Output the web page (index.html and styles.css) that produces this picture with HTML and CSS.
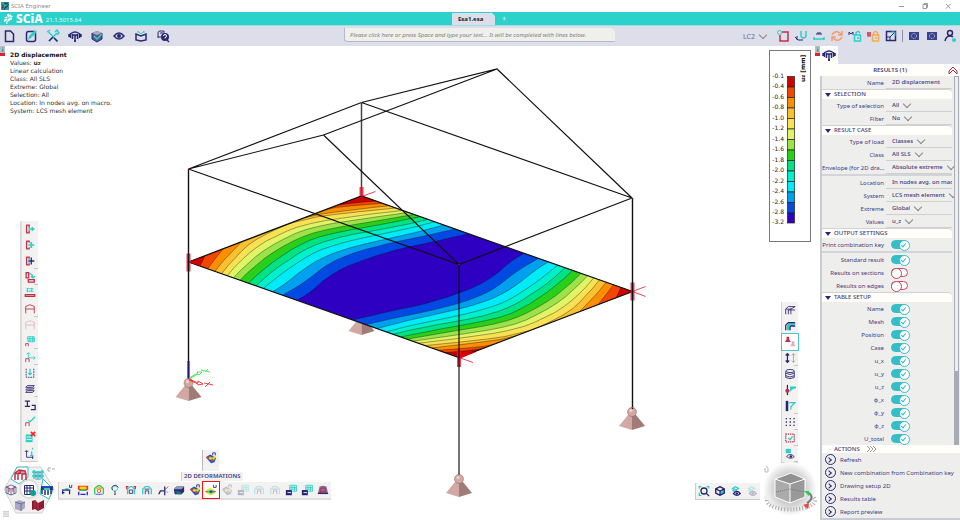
FILE: index.html
```html
<!DOCTYPE html>
<html lang="en">
<head>
<meta charset="utf-8">
<title>SCIA Engineer</title>
<link rel="stylesheet" href="styles.css">
</head>
<body>
<svg class="defs" aria-hidden="true">
  <defs>
    <symbol id="tree" viewBox="0 0 14 14"><path fill="currentColor" d="M6 1l2-1 1 2 2-1 1 2 2 1-2 2 1 2-3 1-1 2H7l-1 3-2 1 1-4-3 1-1-3 2-1-1-3 3 0z"/><path d="M4 12L9 4M3 7l4 0M8 6l4-1M6 3l1 4" stroke="var(--vein)" fill="none" stroke-width="1"/></symbol>
    <symbol id="doc" viewBox="0 0 14 14"><path d="M3.500 2h5l3 3v7.500h-8z" class="n w"/></symbol>
    <symbol id="edit" viewBox="0 0 14 14"><rect x="2.500" y="2.500" width="9" height="10" rx="2" class="n w"/><path d="M4 11l1-4 6-6 2 2-6 6z" class="tf"/></symbol>
    <symbol id="tools" viewBox="0 0 14 14"><path d="M3 12L11 4M2.500 3l9 9" class="t w"/><path d="M3 12l4-4M8 9l3.500 3.500" class="n w"/><path d="M9 3l2-2 2 3-2 2M1 3l3-2" class="t w"/></symbol>
    <symbol id="frame" viewBox="0 0 14 14"><path d="M2.500 4v5M1 5v3M11.500 4v5M13 5v3" class="n w"/><path d="M3 4.500q4-3 8 0M4.500 5v5M9.500 5v5" class="n w"/><path d="M5 6h4M7 6v7M6 12h2" class="n w"/></symbol>
    <symbol id="box" viewBox="0 0 14 14"><path d="M2 4l5-2 5 2v6l-5 3-5-3z" fill="#5a598f"/><path d="M2 4l5-2 5 2-5 2z" fill="#aab"/><path d="M2 4v6l5 3 5-3V4" class="n"/><path d="M4 7l3 3 5-5" class="t w"/></symbol>
    <symbol id="eye" viewBox="0 0 14 14"><path d="M2 7q5-6 10 0-5 6-10 0z" class="n w"/><circle cx="7" cy="7" r="2" class="nf"/></symbol>
    <symbol id="book" viewBox="0 0 14 14"><path d="M7 12L2 11V5l5 2 5-2v6zM2 5v6M12 5v6" class="n w"/><path d="M4 4V2l3 3 3-3v2" class="t"/></symbol>
    <symbol id="help" viewBox="0 0 14 14"><path d="M2 9V4q0-2 2-2h4v3M2 8h3M4 4h3" class="n"/><circle cx="9" cy="8" r="4" class="nf"/><path d="M7.500 7q0-1.500 1.500-1.500t1.500 1.500-1.500 1.500v1" stroke="#fff" fill="none"/><path d="M11 11l2 2" class="n w"/></symbol>
    <symbol id="sel" viewBox="0 0 14 14"><path d="M6 3h6v9H4V6" class="r w"/><circle cx="3.500" cy="3.500" r="2" class="t"/></symbol>
    <symbol id="mag" viewBox="0 0 14 14"><path d="M7 2v4q0 3 2.500 3T12 6V2" class="t w"/><path d="M1 8l3 3h5M3 7v4" class="n"/></symbol>
    <symbol id="dim" viewBox="0 0 14 14"><path d="M2 8v3M12 8v3M2 10h10" class="t w"/><path d="M5 6V4M7 6V4M9 6V4M5 4h4" class="n"/></symbol>
    <symbol id="sync" viewBox="0 0 14 14"><path d="M2 6q2-4 6-3l3 2M12 8q-2 4-6 3L3 9M12 2v4H8M2 12V8h4" stroke="#f79a6a" fill="none" stroke-width="1.500"/></symbol>
    <symbol id="mlock" viewBox="0 0 14 14"><path d="M1 6V3l2 2 2-2v3" class="n"/><path d="M6.500 6v6h6V6zM8 6V4q2-3 4 0M9 9h2" class="t w"/></symbol>
    <symbol id="hlock" viewBox="0 0 14 14"><path d="M2 3v5M4 3v5M1 4h4M1 6h4" class="r"/><path d="M6.500 6h6v6h-6zM7.500 6V4q2-3 4 0v2M9 9h2" stroke="#f5a94d" fill="none" stroke-width="1.500"/></symbol>
    <symbol id="resize" viewBox="0 0 14 14"><path d="M2.500 2.500h9v9h-9z" class="n w"/><path d="M3 8h3v3M6 8l5-5" class="n"/><path d="M7 3h4v4" class="t"/></symbol>
    <symbol id="flag" viewBox="0 0 14 14"><rect x="2" y="3" width="10" height="8" fill="#38419a"/><circle cx="7" cy="7" r="2.500" fill="none" stroke="#f4dd62" stroke-dasharray="1 1"/></symbol>
    <symbol id="user" viewBox="0 0 14 14"><circle cx="7" cy="4" r="2.500" class="n w"/><path d="M2 12q1-5 5-5 2 0 3 1" class="n w"/><circle cx="11" cy="11" r="2" class="tf"/></symbol>

    <symbol id="b-arrow" viewBox="0 0 14 14"><path d="M3 2v10M3 2.500h3v3M3 11.500h3v-3" class="r w"/><path d="M5 7h7M9 5l2.500 2L9 9" class="t w"/></symbol>
    <symbol id="b-plus" viewBox="0 0 14 14"><path d="M3 2v10M3 2.500h3v2M3 11.500h3v-2" class="r w"/><path d="M5 7h7M8.500 3.500v7" class="t" stroke-width="2"/></symbol>
    <symbol id="b-split" viewBox="0 0 14 14"><path d="M3 2v10M3 2.500h3v2M3 11.500h3v-2" class="r w"/><path d="M5 7h7M8.500 3v8" class="n w"/><path d="M5 5h3M5 9h3" class="t"/></symbol>
    <symbol id="b-rot" viewBox="0 0 14 14"><path d="M2.500 2v6h3V2zM5 10h7v3H5z" class="r w"/><path d="M6 3q4 0 4.500 5M8 6l2.500 2L13 6" class="t w"/></symbol>
    <symbol id="b-mir" viewBox="0 0 14 14"><path d="M3 2h8M3 5h8M4 1v5M9 1v5" class="t"/><path d="M1.500 9h11v2h-11z" class="r w"/></symbol>
    <symbol id="portal" viewBox="0 0 14 14"><path d="M2 12V4l5-2 5 2v8M2 7h10" class="r"/></symbol>
    <symbol id="mesh" viewBox="0 0 14 14"><path d="M4 2h8v6H5zM7 2v6M10 2v6M4 4h8M4 6h8" class="t"/><path d="M2 13v-3h3v3" class="r"/></symbol>
    <symbol id="axes" viewBox="0 0 14 14"><path d="M5 2v6h8M11 6l2 2-2 2M3 4l2-2 2 2" class="t"/><path d="M2 13v-4h4v4" class="r"/></symbol>
    <symbol id="down" viewBox="0 0 14 14"><path d="M2.500 2v10h9V2" class="n" stroke-dasharray="2 1"/><path d="M7 2v7M5 7l2 2 2-2" class="t w"/></symbol>
    <symbol id="layers" viewBox="0 0 14 14"><path d="M4 3h8l-2 2H2zM4 6h8l-2 2H2zM4 9h8l-2 2H2z" class="n"/></symbol>
    <symbol id="section" viewBox="0 0 14 14"><path d="M1 2.500h6M1 8.500h6M4 2.500v6M9 7.500h4v5H8" class="n w"/></symbol>
    <symbol id="check" viewBox="0 0 14 14"><path d="M5 6l2 2 6-6" class="t w"/><path d="M2 13v-4h4v4" class="r"/></symbol>
    <symbol id="tabx" viewBox="0 0 14 14"><path d="M2 4h8v9H2z" class="tf"/><path d="M3 7h6M3 10h6" stroke="#fff"/><path d="M8 1l5 5M13 1L8 6" stroke="#f22" stroke-width="2"/></symbol>
    <symbol id="ruler" viewBox="0 0 14 14"><path d="M3 4v8h8M1 5h4M10 10v4" class="n"/><path d="M9 5v5M7 10h4M10 1v2" class="t w"/></symbol>

    <symbol id="c1" viewBox="0 0 14 14"><path d="M2 12V7h8v5M1 10h3" class="n w"/><path d="M2 7l5-2 4 2" class="t"/><path d="M10 1v3h2.500V1" class="n"/></symbol>
    <symbol id="rainbow" viewBox="0 0 14 14"><path d="M1 2h12v4l-2 2H3L1 6z" fill="#e32"/><path d="M3 3h8v3H3z" fill="#fd0"/><path d="M4 6h6v2H4z" fill="#2c6"/><path d="M2 9v4M12 9v4M4 12h6" stroke="#22e" fill="none" stroke-width="1.500"/></symbol>
    <symbol id="arch" viewBox="0 0 14 14"><path d="M2 12V6l3-3h4l3 3v6" class="t w"/><path d="M5 12V8h4v4M4 6h6" class="n"/></symbol>
    <symbol id="archc" viewBox="0 0 14 14"><path d="M2 12V5l4-3h2l4 3v7" stroke="#2c5" fill="none" stroke-width="1.500"/><circle cx="7" cy="8" r="2" fill="none" stroke="#e42"/><path d="M4 6l3-2 3 2" stroke="#fa0" fill="none" stroke-width="1.500"/><path d="M3 12h8" stroke="#24e"/></symbol>
    <symbol id="bulb" viewBox="0 0 14 14"><path d="M5 8Q2 5 5 3q4-2 5 2 0 2-2 3z" class="t"/><path d="M4 7q-2-3 1-5 4-2 6 2M7 8v4M6 12h2" class="n"/></symbol>
    <symbol id="archr" viewBox="0 0 14 14"><path d="M3 12V6l3-3h2l3 3v6" class="t w"/><path d="M1 3h3M10 3h3M2 3v3M12 3v3" class="r w"/><path d="M5 11V7h4v4z" class="n"/></symbol>
    <symbol id="node" viewBox="0 0 14 14"><path d="M2 12l2-4h5v5M9 8V3" class="n w"/><path d="M9 8l4 2" class="t"/><path d="M9 7l4-4" class="r"/></symbol>
    <symbol id="slab" viewBox="0 0 14 14"><path d="M1 6l3-3h9v6l-3 3H2z" class="nf"/><path d="M1 6l3-3h9l-3 3z" fill="#9296bb"/><path d="M2 9l4-1 4 2v2H5z" fill="#14727c"/></symbol>
    <symbol id="cmap" viewBox="0 0 14 14"><path d="M1 6l5-3 7 4-2 5-4 1z" fill="#1d49d8"/><path d="M3 6l3-1 6 3-3 3z" fill="#1fd54f"/><path d="M3 8l3-2 2 1-1 2z" fill="#fe2"/><path d="M1 6l3-1 1 1-1 3zM7 9l2-1 1 2-2 2z" fill="#e33"/><path d="M8 7l3-2 2 1-3 3z" fill="#fc1"/><path d="M9 4V1h3v3" class="n"/></symbol>
    <symbol id="defo" viewBox="0 0 14 14"><path d="M0 9q4-5 7-4t6 4q-4 4-6 4T0 9z" fill="#dfe61a"/><path d="M3 9q4-4 8 0-4 4-8 0z" fill="#1cc9c0"/><path d="M5 9q2-2 4 0-2 2-4 0z" fill="#22d"/><path d="M0 9l3-1v2zM13 9l-3-1v2z" fill="#e22"/><path d="M10 1v3h3V1" class="n"/></symbol>
    <symbol id="tabs" viewBox="0 0 14 14"><path d="M5.500 1.500h8v7h-8zM6 4h7M6 6h7M8 2v6M11 2v6" class="t"/><path d="M1 7h6l1 1v5H1z" class="nf"/><path d="M3 10h4" stroke="#fff"/></symbol>
    <symbol id="slabr" viewBox="0 0 14 14"><path d="M3 3q4-2 8 0l2 8H1z" fill="#77769f"/><path d="M4 11V6q3-3 6 0v5M4 9h6" class="r w"/><path d="M1 11h12" class="n w"/></symbol>
    <symbol id="cube" viewBox="0 0 14 14"><path d="M2 4.500L7 2l5 2.500v5L7 12 2 9.500z" fill="#fff" class="n"/><path d="M7 7l5-2.500v5L7 12z" class="tf"/><path d="M2 4.500L7 2l5 2.500v5L7 12 2 9.500zL7 7l5-2.500M7 7v5" class="n w"/></symbol>
    <symbol id="zoomall" viewBox="0 0 14 14"><path d="M1.500 4V2H4M10 2h2.500v2M1.500 9v3H4" class="t w"/><circle cx="7" cy="7" r="3.500" class="n w"/><path d="M10 10l3 3" class="n w"/></symbol>
    <symbol id="eyes" viewBox="0 0 14 14"><path d="M3 4l3-2 4 2-3 2zM3 6l3 2" class="t w"/><path d="M4 10q4-5 8 0-4 4-8 0z" class="n w"/><circle cx="8" cy="10" r="1.500" class="nf"/></symbol>
    <symbol id="gridm" viewBox="0 0 14 14"><path d="M2.500 2.500h9v9h-9zM3 5h8M3 8h8M5 3v8M8 3v8" class="n"/><circle cx="11" cy="10" r="3" fill="#139b96"/></symbol>
    <symbol id="house" viewBox="0 0 14 14"><path d="M2 12V5l4-3 6 1 1 3v6M5 12V6l3-3M9 12V6l4 0M2 5l3 1 3-1" stroke="#b54a5a" class="r w"/><path d="M2 5l4-3 6 1 1 3-4 0-4 0z" class="rf" opacity=".5"/></symbol>
    <symbol id="truss" viewBox="0 0 14 14"><path d="M1 4h12M1 8h12M3 2v9M7 3v9M11 2v9" class="t w"/><path d="M5 4v8M9 4v8" class="n" opacity=".5"/></symbol>
    <symbol id="gray" viewBox="0 0 14 14"><path d="M2 4l4-2 6 2v6l-4 3-6-2z" fill="#a9a8c4"/><path d="M2 4l6 2 4-2M8 6v7" stroke="#6e6c9c" fill="none"/></symbol>
    <symbol id="redbk" viewBox="0 0 14 14"><path d="M1 3l3-1 3 3 6-3v8l-6 3-3-2-3 1z" fill="#8c1d31"/><path d="M7 5v8M4 2v8" stroke="#c63650" fill="none"/></symbol>
    <symbol id="model" viewBox="0 0 14 14"><path d="M2 4l5-2 5 2v6l-5 2-5-2zM2 4l5 2 5-2M7 6v6M4 3v8M10 3v8" class="n" opacity=".6"/><path d="M5 5v4M9 5v4" class="r"/></symbol>
    <symbol id="rframe" viewBox="0 0 14 14"><path d="M1 3h12v4H1z" fill="#2b45c8"/><path d="M4 5h6v2H4z" fill="#2dd3a0"/><path d="M2 4v7M5 7v5M11 4v7M8 7v5" class="n w"/></symbol>

    <symbol id="beam" viewBox="0 0 14 14"><path d="M2 12V6l3-3h8M5 12V7h8M8 12V5M2 6h6l5-3" class="n"/></symbol>
    <symbol id="beamt" viewBox="0 0 14 14"><path d="M5 12V7q0-2 2-2h6" class="t" stroke-width="3"/><path d="M2 12V6l3-3h8M7 12V8l1-1h5" class="n w"/></symbol>
    <symbol id="pin" viewBox="0 0 14 14"><path d="M3 1h3v3l2 3H1l2-3z" class="rf"/><path d="M9 6h3v3l1 3H7l2-3z" class="rf" opacity=".4"/></symbol>
    <symbol id="loads" viewBox="0 0 14 14"><path d="M4 2v10M2 4l2-2 2 2M2 10l2 2 2-2" class="n w"/><path d="M11 2v10M9 4l2-2 2 2M9 10l2 2 2-2" class="n" opacity=".4"/></symbol>
    <symbol id="disks" viewBox="0 0 14 14"><ellipse cx="7" cy="3.500" rx="5" ry="1.800" class="n"/><path d="M2 4v7q5 3 10 0V4M2 6q5 3 10 0M2 9q5 3 10 0" class="n"/></symbol>
    <symbol id="rod" viewBox="0 0 14 14"><path d="M4 1v12" class="n w"/><circle cx="4" cy="8" r="2.500" class="rf"/><path d="M7 3h7v2l-4 1-3 3z" class="tf"/></symbol>
    <symbol id="plate" viewBox="0 0 14 14"><path d="M2 1h3v12H2z" class="nf"/><path d="M6 3h7L8 8v3" class="t w"/></symbol>
    <symbol id="dots" viewBox="0 0 14 14"><path d="M2 3h11M2 7h11M2 11h11" class="n w" stroke-dasharray="1.500 3"/></symbol>
    <symbol id="dsel" viewBox="0 0 14 14"><path d="M2 2.500h10v9H2z" class="r w" stroke-dasharray="1.500 1"/><path d="M5 7l2 2 3-4" class="t w"/></symbol>
    <symbol id="eyet" viewBox="0 0 14 14"><path d="M2 1h6v5H2z" class="tf"/><path d="M3 10q4-5 9 0-4 4-9 0z" class="n"/><circle cx="8" cy="10" r="1.500" class="nf"/></symbol>

    <symbol id="support" viewBox="-14 -6 28 26" overflow="visible"><path d="M-4 3L-13 14 0 18V2z" fill="#d2a8a4"/><path d="M4 3L13 14 0 18V2z" fill="#a17b77"/><circle r="4.500" fill="#d2a8a4" stroke="#7c5c59" stroke-width=".5"/><circle cx="-1" cy="-1.500" r="1.500" fill="#f1d4d0"/></symbol>
    <clipPath id="plateClip"><path d="M188.500 262L361.500 196l271 95.500-173.500 66z"/></clipPath>
    <radialGradient id="halo"><stop offset=".5" stop-color="#c8c8c8"/><stop offset="1" stop-color="#fff"/></radialGradient>
  </defs>
</svg>

<div class="app">
  <header class="titlebar">
    <svg class="app-icon"><use href="#tree"/></svg>
    <h1>SCIA Engineer</h1>
    <div class="window-buttons">
      <button aria-label="Minimize"><svg viewBox="0 0 8 8"><path d="M1 4.500h5"/></svg></button>
      <button aria-label="Restore"><svg viewBox="0 0 8 8"><path d="M2 2.500h3.500v4H2zM3 2V1.500h3.500V5.500H6"/></svg></button>
      <button aria-label="Close"><svg viewBox="0 0 8 8"><path d="M2 2l4.500 4.500M6.500 2L2 6.500"/></svg></button>
    </div>
  </header>

  <div class="brandbar">
    <div class="brand"><svg class="brand-icon"><use href="#tree"/></svg><strong>SCiA</strong><span>21.1.5015.64</span></div>
    <nav class="tabs"><a class="tab" href="#project">Esa1.esa</a><button aria-label="New tab">+</button></nav>
  </div>

  <div class="toolbar">
    <div class="tools main-tools">
      <button aria-label="File"><svg><use href="#doc"/></svg></button>
      <button aria-label="Edit"><svg><use href="#edit"/></svg></button>
      <button aria-label="Tools"><svg><use href="#tools"/></svg></button>
      <button aria-label="Structure"><svg><use href="#frame"/></svg></button>
      <button aria-label="Libraries"><svg><use href="#box"/></svg></button>
      <button aria-label="View"><svg><use href="#eye"/></svg></button>
      <button aria-label="Reports"><svg><use href="#book"/></svg></button>
      <button aria-label="Help"><svg><use href="#help"/></svg></button>
    </div>
    <input class="command" type="text" aria-label="Command" placeholder="Please click here or press Space and type your text... It will be completed with lines below.">
    <div class="tools view-tools">
      <span class="pick"><select aria-label="Load case"><option>LC2</option></select></span>
      <button aria-label="Selection"><svg><use href="#sel"/></svg></button>
      <button aria-label="Snap"><svg><use href="#mag"/></svg></button>
      <button aria-label="Dimension"><svg><use href="#dim"/></svg></button>
      <button aria-label="Refresh"><svg><use href="#sync"/></svg></button>
      <button aria-label="Unlock model"><svg><use href="#mlock"/></svg></button>
      <button aria-label="Lock mesh"><svg><use href="#hlock"/></svg></button>
      <button aria-label="Resize"><svg><use href="#resize"/></svg></button>
      <i class="divider"></i>
      <button aria-label="Code"><svg><use href="#flag"/></svg></button>
      <button aria-label="Annex"><svg><use href="#flag"/></svg></button>
      <button aria-label="User"><svg><use href="#user"/></svg></button>
    </div>
  </div>

  <main class="work">
    <section class="viewport" aria-label="Model view">
      <svg class="scene" viewBox="0 46 820 474" preserveAspectRatio="xMinYMin meet">
        <use href="#support" x="347.500" y="311" width="28" height="26"/>
        <path class="member soft" d="M361.500 103v93"/>
        <g clip-path="url(#plateClip)">
          <path fill="#2d00c2" d="M180 190h460v170H180z"/>
          <g id="bands" class="bands" transform="translate(180 60) scale(.33333)">
            <path fill="#0049e2" d="M350 721L368 711 385 700 398 690 410 680 424 667 440 655 459 642 480 630 504 618 530 608 580 590 640 572 680 562 740 550 800 536 867 521 700 200-200 200-200 900z"/>
            <path fill="#00a0ee" d="M307 706L350 681 376 664 400 646 420 630 440 616 463 603 490 591 519 580 550 570 585 561 620 552 660 543 700 535 760 522 825 507 700 200-200 200-200 900z"/>
            <path fill="#00ebf8" d="M278 695L304 679 330 660 355 640 380 622 404 606 430 593 454 582 480 573 515 562 550 553 620 537 700 519 792 495 700 200-200 200-200 900z"/>
            <path fill="#00f0cc" d="M250 685L275 665 300 645 325 627 350 610 375 594 400 580 424 569 450 560 490 548 530 538 620 519 700 502 765 485 700 200-200 200-200 900z"/>
            <path fill="#00e283" d="M228 678L254 654 280 632 305 614 330 598 355 581 380 567 404 556 430 546 475 533 520 523 620 505 690 491 745 478 700 200-200 200-200 900z"/>
            <path fill="#29d01b" d="M205 670L230 646 255 625 282 604 310 585 334 569 360 555 389 541 420 530 465 519 510 510 600 494 722 470 700 200-200 200-200 900z"/>
            <path fill="#9ae348" d="M180 661L204 637 230 615 254 595 280 577 310 559 340 543 369 530 400 519 440 509 480 501 600 481 703 463 680 200-200 200-200 900z"/>
            <path fill="#e0f465" d="M160 654L182 631 205 610 227 590 250 573 280 554 310 538 344 521 380 508 420 498 460 490 580 472 687 457 650 200-200 200-200 900z"/>
            <path fill="#f9e154" d="M142 647L163 622 185 600 207 580 230 562 259 543 290 528 319 514 350 502 395 490 440 481 560 464 670 451 650 200-200 200-200 900z"/>
            <path fill="#f9c02f" d="M125 641L144 617 165 595 184 574 205 555 230 538 260 522 290 507 330 490 410 471 460 464 540 455 648 444 600 200-200 200-200 900z"/>
            <path fill="#fc8e00" d="M105 634L122 612 140 592 185 545 180 400-200 400-200 900zM375 473L420 463 460 457 540 447 627 437 600 200 350 300z"/>
            <path fill="#f34600" d="M83 626L105 597 130 566 100 400-200 400-200 900zM430 450L470 442 520 437 607 430 600 200 350 300z"/>
            <path fill="#d00000" d="M60 618L75 587 60 400-200 400-200 900zM480 434L530 428 587 423 600 200 400 300z"/>
          </g>
          <use href="#bands" transform="rotate(180 410.500 276.800)"/>
        </g>
        <path class="member" d="M188.500 262L361.500 196l271 95.500-173.500 66z"/>
        <use href="#support" x="174.500" y="377" width="28" height="26"/>
        <use href="#support" x="445" y="473" width="28" height="26"/>
        <use href="#support" x="618" y="406" width="28" height="26"/>
        <path d="M459 353l17-1-17 7z" fill="#d8000c"/>
        <path d="M188.500 262l12-4v8z" fill="#d00000"/>
        <g stroke="#e8142a" stroke-opacity=".8" fill="none">
          <path stroke-width="4" d="M188.500 253.500v18M361.500 187v9M459 350v17M632.500 282.500v18"/>
          <path d="M361.500 196.500l14-5M459 357.500l14 5M632.500 291.500l13-5M632.500 291.500l13 5"/>
        </g>
        <path class="member" d="M188.500 169L361.500 102.500 497 69 632 198 361.500 102.500M188.500 169L323.500 135 497 69M323.500 135L459 264.500 632 198M188.500 169L459 264.500"/>
        <path class="member thick" d="M188.500 169v210M632.500 198v211"/>
        <path d="M459 264.500v210" stroke="#000" stroke-opacity=".55" stroke-width="2"/>
        <path d="M188.500 361v17" stroke="#22127a" stroke-width="2"/>
        <g fill="none" stroke-width=".800"><path stroke="#1ee63c" d="M189 378l9-5-1-1 5 0-3 3-1-1-9 5M201 370l9 2M205 372l3-3"/><path stroke="#f21616" d="M189 379l9 4v-2l5 3-5 1v-1l-9-4M204 383l9 2M205 387l5-5"/></g>
        <path class="dots-red" d="M188.500 168.500v1M361.500 102v1M323.500 134.500v1M497 68.500v1M632 197.500v1M459 264v1M188.500 378v1M632.500 407v1M459 473v1"/>

        <g class="legend">
          <rect x="769.500" y="50.500" width="41" height="191" fill="#fff" stroke="#777"/>
          <g stroke="#222" stroke-width=".700">
            <rect x="787.500" y="76.500" width="7" height="10.500" fill="#d00000"/><rect x="787.500" y="87" width="7" height="10.500" fill="#f34600"/><rect x="787.500" y="97.500" width="7" height="10.500" fill="#fc8e00"/><rect x="787.500" y="108" width="7" height="10.500" fill="#f9c02f"/><rect x="787.500" y="118.500" width="7" height="10.500" fill="#f9e154"/><rect x="787.500" y="129" width="7" height="10.500" fill="#e0f465"/><rect x="787.500" y="139.500" width="7" height="10.500" fill="#9ae348"/><rect x="787.500" y="150" width="7" height="10.500" fill="#29d01b"/><rect x="787.500" y="160.500" width="7" height="10.500" fill="#00e283"/><rect x="787.500" y="171" width="7" height="10.500" fill="#00f0cc"/><rect x="787.500" y="181.500" width="7" height="10.500" fill="#00ebf8"/><rect x="787.500" y="192" width="7" height="10.500" fill="#00a0ee"/><rect x="787.500" y="202.500" width="7" height="10.500" fill="#0049e2"/><rect x="787.500" y="213" width="7" height="10" fill="#2d00c2"/>
          </g>
          <g class="ticks"><text x="784" y="78">-0.1</text><text x="784" y="88">-0.4</text><text x="784" y="99">-0.6</text><text x="784" y="109">-0.8</text><text x="784" y="120">-1.0</text><text x="784" y="130">-1.2</text><text x="784" y="141">-1.4</text><text x="784" y="151">-1.6</text><text x="784" y="162">-1.8</text><text x="784" y="172">-2.0</text><text x="784" y="183">-2.2</text><text x="784" y="193">-2.4</text><text x="784" y="204">-2.6</text><text x="784" y="214">-2.8</text><text x="784" y="224">-3.2</text></g>
          <text class="unit" transform="translate(805 82) rotate(-90)">u<tspan class="sub">z</tspan> [mm]</text>
        </g>
      </svg>

      <div class="info">
        <strong>2D displacement</strong>
        <span>Values: <b>u<small>z</small></b></span>
        <span>Linear calculation</span>
        <span>Class: All SLS</span>
        <span>Extreme: Global</span>
        <span>Selection: All</span>
        <span>Location: In nodes avg. on macro.</span>
        <span>System: LCS mesh element</span>
      </div>
      <button class="hint hint-left" aria-label="Info">i</button>
      <button class="hint hint-right" aria-label="Info">i</button>

      <div class="palette side-left">
        <button aria-label="Move"><svg><use href="#b-arrow"/></svg></button>
        <button aria-label="Copy"><svg><use href="#b-plus"/></svg></button>
        <button class="cut" aria-label="Multi copy"><svg><use href="#b-split"/></svg></button>
        <button class="cut" aria-label="Rotate"><svg><use href="#b-rot"/></svg></button>
        <button aria-label="Mirror"><svg><use href="#b-mir"/></svg></button>
        <button class="cut" aria-label="Portal"><svg><use href="#portal"/></svg></button>
        <button class="off" aria-label="Disconnect"><svg><use href="#portal"/></svg></button>
        <button class="cut" aria-label="Mesh"><svg><use href="#mesh"/></svg></button>
        <button class="cut" aria-label="Local axes"><svg><use href="#axes"/></svg></button>
        <button aria-label="Load area"><svg><use href="#down"/></svg></button>
        <button class="cut" aria-label="Layers"><svg><use href="#layers"/></svg></button>
        <button aria-label="Cross-sections"><svg><use href="#section"/></svg></button>
        <button aria-label="Check"><svg><use href="#check"/></svg></button>
        <button aria-label="Clear table"><svg><use href="#tabx"/></svg></button>
        <button aria-label="Coordinates info"><svg><use href="#ruler"/></svg></button>
      </div>

      <div class="palette side-right">
        <button aria-label="Wireframe"><svg><use href="#beam"/></svg></button>
        <button class="cut" aria-label="Rendered"><svg><use href="#beamt"/></svg></button>
        <button class="active" aria-label="Supports"><svg><use href="#pin"/></svg></button>
        <button class="cut" aria-label="Loads"><svg><use href="#loads"/></svg></button>
        <button aria-label="Results"><svg><use href="#disks"/></svg></button>
        <button aria-label="Node labels"><svg><use href="#rod"/></svg></button>
        <button class="cut" aria-label="Member labels"><svg><use href="#plate"/></svg></button>
        <button class="cut" aria-label="Grid"><svg><use href="#dots"/></svg></button>
        <button class="cut" aria-label="Select"><svg><use href="#dsel"/></svg></button>
        <button class="cut" aria-label="Visibility"><svg><use href="#eyet"/></svg></button>
      </div>

      <div class="palette view-bar">
        <button aria-label="Zoom all"><svg><use href="#zoomall"/></svg></button>
        <button aria-label="Clipping box"><svg><use href="#cube"/></svg></button>
        <button aria-label="Show selected"><svg><use href="#eyes"/></svg></button>
        <button class="off" aria-label="Hide selected"><svg><use href="#eyes"/></svg></button>
      </div>

      <svg class="view-cube" viewBox="762 462 56 56" role="img" aria-label="View orientation">
        <circle cx="790" cy="489" r="27" fill="url(#halo)"/>
        <path d="M767 500a24 9 0 1 0 46-3" fill="none" stroke="#aaa" stroke-width="4" stroke-dasharray="1 2"/>
        <path d="M767 493l-4 5 8 2" fill="#eee"/>
        <path d="M775 479l16-6 14 6v18l-15 6-15-6z" fill="#ababab"/><path d="M775 479l16-6 14 6-15 5z" fill="#919191"/><path d="M790 484l15-5v18l-15 6z" fill="#999"/>
        <path d="M775 479l16-6 14 6v18l-15 6-15-6zM775 479l15 5 15-5M790 484v19" fill="none" stroke="#fff"/>
        <path d="M776 492l14-3 14 3" fill="none" stroke="#777" stroke-dasharray="1 1"/>
        <path d="M809 493q6 5-2 10" fill="none" stroke="#777" stroke-width="2"/>
        <path d="M804 491h5v5z" fill="#28cf4d"/><path d="M803 505l6-2-1 6z" fill="#f04343"/>
        <path d="M766 466l2 2v4h-3v-4" fill="none" stroke="#bbb"/>
      </svg>

      <div class="wheel">
        <svg class="wheel-bg" viewBox="0 0 52 48" aria-hidden="true"><path d="M14 1h24l13 22-12 24H13L1 23z" fill="#f1f0ee" stroke="#d2d2d2"/><path d="M14 1h11v10l-9 7-8-5zM40 13l10 10-4 10-9-5z" fill="#fff" stroke="#2ebfc4"/><circle cx="26" cy="23" r="9" fill="#fff" stroke="#ddd" stroke-width="2"/></svg>
        <div class="spokes pair">
          <button aria-label="Structure"><svg><use href="#house"/></svg></button>
          <button aria-label="Loads"><svg><use href="#truss"/></svg></button>
        </div>
        <div class="spokes">
          <button aria-label="Model"><svg><use href="#model"/></svg></button>
          <button aria-label="Workstations"><svg><use href="#gridm"/></svg></button>
          <button aria-label="Results"><svg><use href="#rframe"/></svg></button>
        </div>
        <div class="spokes pair">
          <button aria-label="Concrete"><svg><use href="#gray"/></svg></button>
          <button aria-label="Report"><svg><use href="#redbk"/></svg></button>
        </div>
      </div>
      <button class="collapse" aria-label="Collapse"><svg viewBox="0 0 8 5"><path d="M4 1H1v3h2M5 2h3" fill="none" stroke="#aaa"/></svg></button>
      <button class="menu" aria-label="Menu"><svg viewBox="0 0 7 6"><path d="M0 .500h7M0 3h7M0 5.500h7" stroke="#aaa"/></svg></button>

      <div class="palette popup"><button aria-label="3D displacement"><svg><use href="#cmap"/></svg></button></div>
      <span class="tip">2D DEFORMATIONS</span>
      <div class="palette bottom-bar">
        <button aria-label="Nodal displacements"><svg><use href="#c1"/></svg></button>
        <button aria-label="1D stresses"><svg><use href="#rainbow"/></svg></button>
        <button aria-label="1D deformations"><svg><use href="#archc"/></svg></button>
        <button aria-label="Reactions"><svg><use href="#bulb"/></svg></button>
        <button aria-label="Internal forces"><svg><use href="#archr"/></svg></button>
        <button aria-label="Member forces"><svg><use href="#arch"/></svg></button>
        <button aria-label="Node forces"><svg><use href="#node"/></svg></button>
        <button aria-label="Slab forces"><svg><use href="#slab"/></svg></button>
        <button aria-label="2D stresses"><svg><use href="#cmap"/></svg></button>
        <button class="marked" aria-label="2D deformations"><svg><use href="#defo"/></svg></button>
        <button class="off" aria-label="Section results"><svg><use href="#cmap"/></svg></button>
        <button class="off" aria-label="Solid table"><svg><use href="#tabs"/></svg></button>
        <button class="off" aria-label="Buckling"><svg><use href="#arch"/></svg></button>
        <button class="off" aria-label="Modes"><svg><use href="#arch"/></svg></button>
        <button aria-label="Result tables"><svg><use href="#tabs"/></svg></button>
        <button aria-label="Engineering report"><svg><use href="#tabs"/></svg></button>
        <button aria-label="Autodesign"><svg><use href="#slabr"/></svg></button>
      </div>
    </section>

    <aside class="panel">
      <div class="panel-tabs"><button aria-label="Results properties"><svg><use href="#frame"/></svg></button></div>
      <h2>RESULTS (1)<svg class="up" viewBox="0 0 10 10"><path d="M1 6l4-4 4 4M1 9l4-4 4 4M1 6v3M9 6v3"/></svg></h2>
      <div class="props">
        <div class="row line"><label for="name">Name</label><input id="name" type="text" value="2D displacement"></div>
        <h3>SELECTION</h3>
        <div class="row line"><label for="tos">Type of selection</label><span class="pick"><select id="tos"><option>All</option></select></span></div>
        <div class="row line"><label for="filter">Filter</label><span class="pick"><select id="filter"><option>No</option></select></span></div>
        <h3>RESULT CASE</h3>
        <div class="row line"><label for="tol">Type of load</label><span class="pick"><select id="tol"><option>Classes</option></select></span></div>
        <div class="row line"><label for="class">Class</label><span class="pick"><select id="class"><option>All SLS</option></select></span></div>
        <div class="row line"><label for="env">Envelope (for 2D dra…</label><span class="pick"><select id="env"><option>Absolute extreme</option></select></span></div>
        <hr>
        <div class="row line"><label for="loc">Location</label><span class="pick clip"><select id="loc"><option>In nodes avg. on macro</option></select></span></div>
        <div class="row line"><label for="sys">System</label><span class="pick"><select id="sys"><option>LCS mesh element</option></select></span></div>
        <div class="row line"><label for="ext">Extreme</label><span class="pick"><select id="ext"><option>Global</option></select></span></div>
        <div class="row line"><label for="val">Values</label><span class="pick"><select id="val"><option>u_z</option></select></span></div>
        <h3>OUTPUT SETTINGS</h3>
        <div class="row"><label for="pck">Print combination key</label><input id="pck" type="checkbox" checked></div>
        <hr>
        <div class="row"><label for="std">Standard result</label><input id="std" type="checkbox" checked></div>
        <div class="row"><label for="ros">Results on sections</label><input id="ros" type="checkbox"></div>
        <div class="row"><label for="roe">Results on edges</label><input id="roe" type="checkbox"></div>
        <h3>TABLE SETUP</h3>
        <div class="row"><label for="t1">Name</label><input id="t1" type="checkbox" checked></div>
        <div class="row"><label for="t2">Mesh</label><input id="t2" type="checkbox" checked></div>
        <div class="row"><label for="t3">Position</label><input id="t3" type="checkbox" checked></div>
        <div class="row"><label for="t4">Case</label><input id="t4" type="checkbox" checked></div>
        <div class="row"><label for="t5">u_x</label><input id="t5" type="checkbox" checked></div>
        <div class="row"><label for="t6">u_y</label><input id="t6" type="checkbox" checked></div>
        <div class="row"><label for="t7">u_z</label><input id="t7" type="checkbox" checked></div>
        <div class="row"><label for="t8">φ_x</label><input id="t8" type="checkbox" checked></div>
        <div class="row"><label for="t9">φ_y</label><input id="t9" type="checkbox" checked></div>
        <div class="row"><label for="t10">φ_z</label><input id="t10" type="checkbox" checked></div>
        <div class="row"><label for="t11">U_total</label><input id="t11" type="checkbox" checked></div>
        <i class="scroll"></i>
      </div>
      <div class="actions">
        <h3>ACTIONS <svg viewBox="0 0 10 8"><path d="M1 1l3 3-3 3M4 1l3 3-3 3M7 1l3 3-3 3"/></svg></h3>
        <button>Refresh</button>
        <button>New combination from Combination key</button>
        <button>Drawing setup 2D</button>
        <button>Results table</button>
        <button>Report preview</button>
      </div>
    </aside>
  </main>
</div>
</body>
</html>
```
FILE: styles.css
```css
:root {
  --navy: #2b2873;
  --teal: #2bcfc9;
  --red: #bf3049;
  --bar: #dcdfea;
  --panel: #eeeeed;
  --ink: #3f3c7c;
}
* { box-sizing: border-box; }
body { margin: 0; background: #fff; font-family: "Noto Sans", sans-serif; font-size: 7px; color: var(--ink); }
button, input, select { margin: 0; padding: 0; border: 0; background: none; font: inherit; color: inherit; }
h1, h2, h3 { margin: 0; font-size: inherit; font-weight: 400; }
button svg { display: block; width: 14px; height: 14px; }
.defs { position: absolute; width: 0; height: 0; }
.n { fill: none; stroke: var(--navy); }
.t { fill: none; stroke: var(--teal); }
.r { fill: none; stroke: var(--red); }
.w { stroke-width: 1.5; }
.nf { fill: var(--navy); }
.tf { fill: var(--teal); }
.rf { fill: var(--red); }

.app { display: flex; flex-direction: column; min-height: 100vh; }

.titlebar { display: flex; align-items: center; height: 12px; padding-left: 1px; gap: 2px; color: #8d8d8d; }
.titlebar h1 { font-size: 6px; line-height: 12px; }
.app-icon { width: 8px; height: 8px; background: #2f9d9d; color: #164a5a; --vein: #7fd6d0; }
.window-buttons { display: flex; gap: 15px; margin-left: auto; padding-right: 8px; }
.window-buttons svg { width: 8px; height: 8px; fill: none; stroke: #999; stroke-width: 1; }

.brandbar { display: grid; grid-template-columns: 1fr auto 1fr; height: 14px; background: #2bd2cb; border-bottom: 1px solid #9fdde0; }
.brand { display: flex; align-items: center; gap: 3px; padding-left: 3px; color: #fff; }
.brand-icon { width: 10px; height: 11px; --vein: #2bd2cb; color: #fff; }
.brand strong { font: 800 12px/13px "Noto Sans", sans-serif; }
.brand span { font-size: 6px; line-height: 10px; align-self: flex-end; color: #d8fffc; }
.tabs { display: flex; align-items: flex-end; gap: 5px; }
.tab { width: 43px; padding-left: 6px; background: var(--bar); color: #222; font: 700 6px/12px "Noto Sans", sans-serif; text-decoration: none; clip-path: polygon(0 0, 40px 0, 100% 3px, 100% 100%, 0 100%); }
.tabs button { font-size: 8px; line-height: 12px; color: #c8f6f3; width: 8px; }

.toolbar { display: grid; grid-template-columns: 1fr 271px 1fr; align-items: start; height: 20px; background: var(--bar); padding: 2px 3px 0 2px; }
.tools { display: flex; align-items: center; height: 16px; }
.main-tools { gap: 8px; }
.view-tools { gap: 4px; justify-content: flex-end; }
.view-tools .pick { margin-right: 6px; color: #6c6b8c; }
.divider { width: 1px; height: 12px; background: #8f90a8; }
.command { width: 100%; height: 14px; padding: 0 5px; background: #efefeb; border: 1px solid #b5b8c6; border-width: 0 0 1px 1px; border-radius: 0 5px 0 3px; font: italic 6px/12px "Noto Sans", sans-serif; }
.command::placeholder { color: #808080; opacity: 1; }

.pick { display: inline-flex; align-items: center; gap: 5px; }
.pick select { appearance: none; field-sizing: content; }
.pick::after { content: ""; flex: none; width: 5px; height: 5px; border: solid #888; border-width: 0 1px 1px 0; transform: translateY(-1px) rotate(45deg); }

.work { display: grid; grid-template-columns: minmax(0, 1fr) 140px; flex: 1; }
.viewport { position: relative; background: #fff; }
.scene { display: block; width: 100%; }
.member { fill: none; stroke: #111; stroke-width: 1.2; }
.soft { stroke: #444; stroke-width: 1.5; }
.thick { stroke-width: 1.4; }
.bands path { stroke: #111; stroke-opacity: .75; stroke-width: 1.5; stroke-linejoin: round; }
.dots-red { stroke: #e22; stroke-width: 1; }
.ticks text { text-anchor: end; font: 6px "DejaVu Sans", sans-serif; fill: #222; }
.unit { font: 700 6px "DejaVu Sans", sans-serif; fill: #111; }
.unit .sub { font-size: 5px; }

.info { position: absolute; left: 10px; top: 5px; display: flex; flex-direction: column; font: 6px/8px "DejaVu Sans", sans-serif; color: #333; }
.info strong { color: #111; }
.info small { font-size: 5px; }
.hint { position: absolute; top: 0; width: 5px; height: 10px; background: #b9bdc4; border-bottom: 3px solid #d23; font: 700 6px/6px "DejaVu Sans", sans-serif; color: #199; }
.hint-left { left: 0; }
.hint-right { right: 0; }

.palette { position: absolute; display: flex; background: #f3f2f0; }
.palette button { display: grid; place-items: center; width: 16px; height: 16px; flex: none; }
.palette .off { opacity: .3; }
.palette svg { width: 12px; height: 12px; }
.side-left { left: 20px; bottom: 58px; flex-direction: column; border-left: 2px solid #dcdcdc; border-bottom: 1px solid #ccc; }
.side-right { right: 22px; bottom: 57px; flex-direction: column; border-left: 1px solid #d5d5d5; border-bottom: 1px solid #ccc; }
.palette .cut { background: linear-gradient(#c8c8c8, #c8c8c8) right bottom / 4px 1px no-repeat; }
.palette .active { background: #fff; outline: 1px solid #4cc4c8; }
.view-bar { right: 60px; bottom: 20px; border-left: 1px solid #ccc; border-bottom: 1px solid #ccc; }
.bottom-bar { left: 58px; bottom: 20px; border-bottom: 2px solid #ddd; border-left: 1px solid #ccc; }
.bottom-bar .marked { background: #fff; outline: 1px solid #f11; }
.popup { left: 202px; bottom: 49px; height: 21px; border-left: 1px solid #bbb; }
.tip { position: absolute; left: 181px; bottom: 39px; padding: 0 2px; background: #f3f2f0; border-left: 1px solid #ccc; font-size: 6px; line-height: 9px; font-weight: 600; white-space: nowrap; }
.view-cube { position: absolute; right: 2px; bottom: 2px; width: 56px; height: 56px; }
.wheel { position: absolute; left: 3px; bottom: 6px; width: 52px; height: 48px; display: flex; flex-direction: column; align-items: center; justify-content: center; gap: 1px; }
.wheel-bg { position: absolute; inset: 0; width: 100%; height: 100%; }
.spokes { position: relative; display: flex; gap: 4px; }
.collapse { position: absolute; left: 47px; bottom: 48px; }
.collapse svg { width: 8px; height: 5px; }
.menu { position: absolute; left: 3px; bottom: 3px; }
.menu svg { width: 6px; height: 6px; }

.panel { display: flex; flex-direction: column; background: var(--bar); }
.panel-tabs { height: 18px; }
.panel-tabs button { width: 18px; height: 18px; padding: 2px; background: #fffefb; }
.panel h2 { position: relative; height: 12px; background: #fffefa; font-size: 6px; line-height: 12px; font-weight: 600; text-align: center; }
.up { position: absolute; right: 2px; top: 1px; width: 10px; height: 10px; fill: none; stroke: #b23048; stroke-width: 1; }
.props { position: relative; background: var(--panel); border-left: 2px solid #c9cbd2; padding-right: 8px; }
.row { display: grid; grid-template-columns: 62px minmax(0, 1fr); align-items: center; height: 13px; column-gap: 2px; line-height: 12px; font-size: 6px; }
.row label { text-align: right; white-space: nowrap; }
.row .pick, .row input { margin: 0; padding-left: 6px; font-weight: 500; height: 12px; }
.line .pick, .line input { border-bottom: 1px solid #cfcfcf; }
.row .pick { overflow: visible; white-space: nowrap; }
.row .clip { overflow: hidden; }
.row .pick select { flex: none; }
.row input[type="checkbox"] { appearance: none; position: relative; width: 17px; height: 9px; margin-left: 5px; padding: 0; border: 1px solid #c04c5e; border-radius: 5px; background: #fff; }
.row input[type="checkbox"]::before { content: ""; position: absolute; left: -1px; top: -1px; width: 9px; height: 9px; border: 1px solid #c04c5e; border-radius: 50%; background: #fff; }
.row input[type="checkbox"]:checked { background: #35bec8; border-color: #35bec8; }
.row input[type="checkbox"]:checked::before { left: 7px; border-color: #35bec8; }
.row input[type="checkbox"]:checked::after { content: ""; position: absolute; left: 10px; top: 1px; width: 2px; height: 4px; border: solid #35bec8; border-width: 0 1px 1px 0; transform: rotate(40deg); }
.props h3, .actions h3 { display: flex; align-items: center; height: 10px; padding-left: 3px; border-top: 1px solid #d2d2d4; background: #fffefa; font-size: 6px; line-height: 9px; font-weight: 500; gap: 3px; }
.props h3 { border-radius: 0 4px 0 0; }
.props h3::before { content: ""; border: 3px solid transparent; border-top: 4px solid var(--navy); border-bottom: 0; }
.props hr { height: 2px; margin: 0; border: 0; background: #d2d4da; }
.scroll { position: absolute; right: 1px; top: 0; bottom: 0; width: 5px; border: 1px solid #a9abb2; background: linear-gradient(#eee 80%, #a9abb2 80%); }
.actions { display: flex; flex-direction: column; flex: 1; background: var(--panel); border-left: 2px solid #c9cbd2; border-bottom: 2px solid #c9cbd2; }
.actions h3 { height: 8px; padding-left: 12px; border: 0; gap: 6px; }
.actions h3 svg { width: 10px; height: 8px; fill: none; stroke: #999; overflow: visible; }
.actions button { position: relative; display: flex; align-items: center; gap: 4px; height: 13px; padding-left: 3px; font-size: 6px; white-space: nowrap; }
.actions button::before { content: ""; width: 9px; height: 9px; border: 1px solid var(--navy); border-radius: 50%; }
.actions button::after { content: ""; position: absolute; left: 5px; top: 5px; width: 3px; height: 3px; border: solid var(--navy); border-width: 1px 1px 0 0; transform: rotate(45deg); }
```
